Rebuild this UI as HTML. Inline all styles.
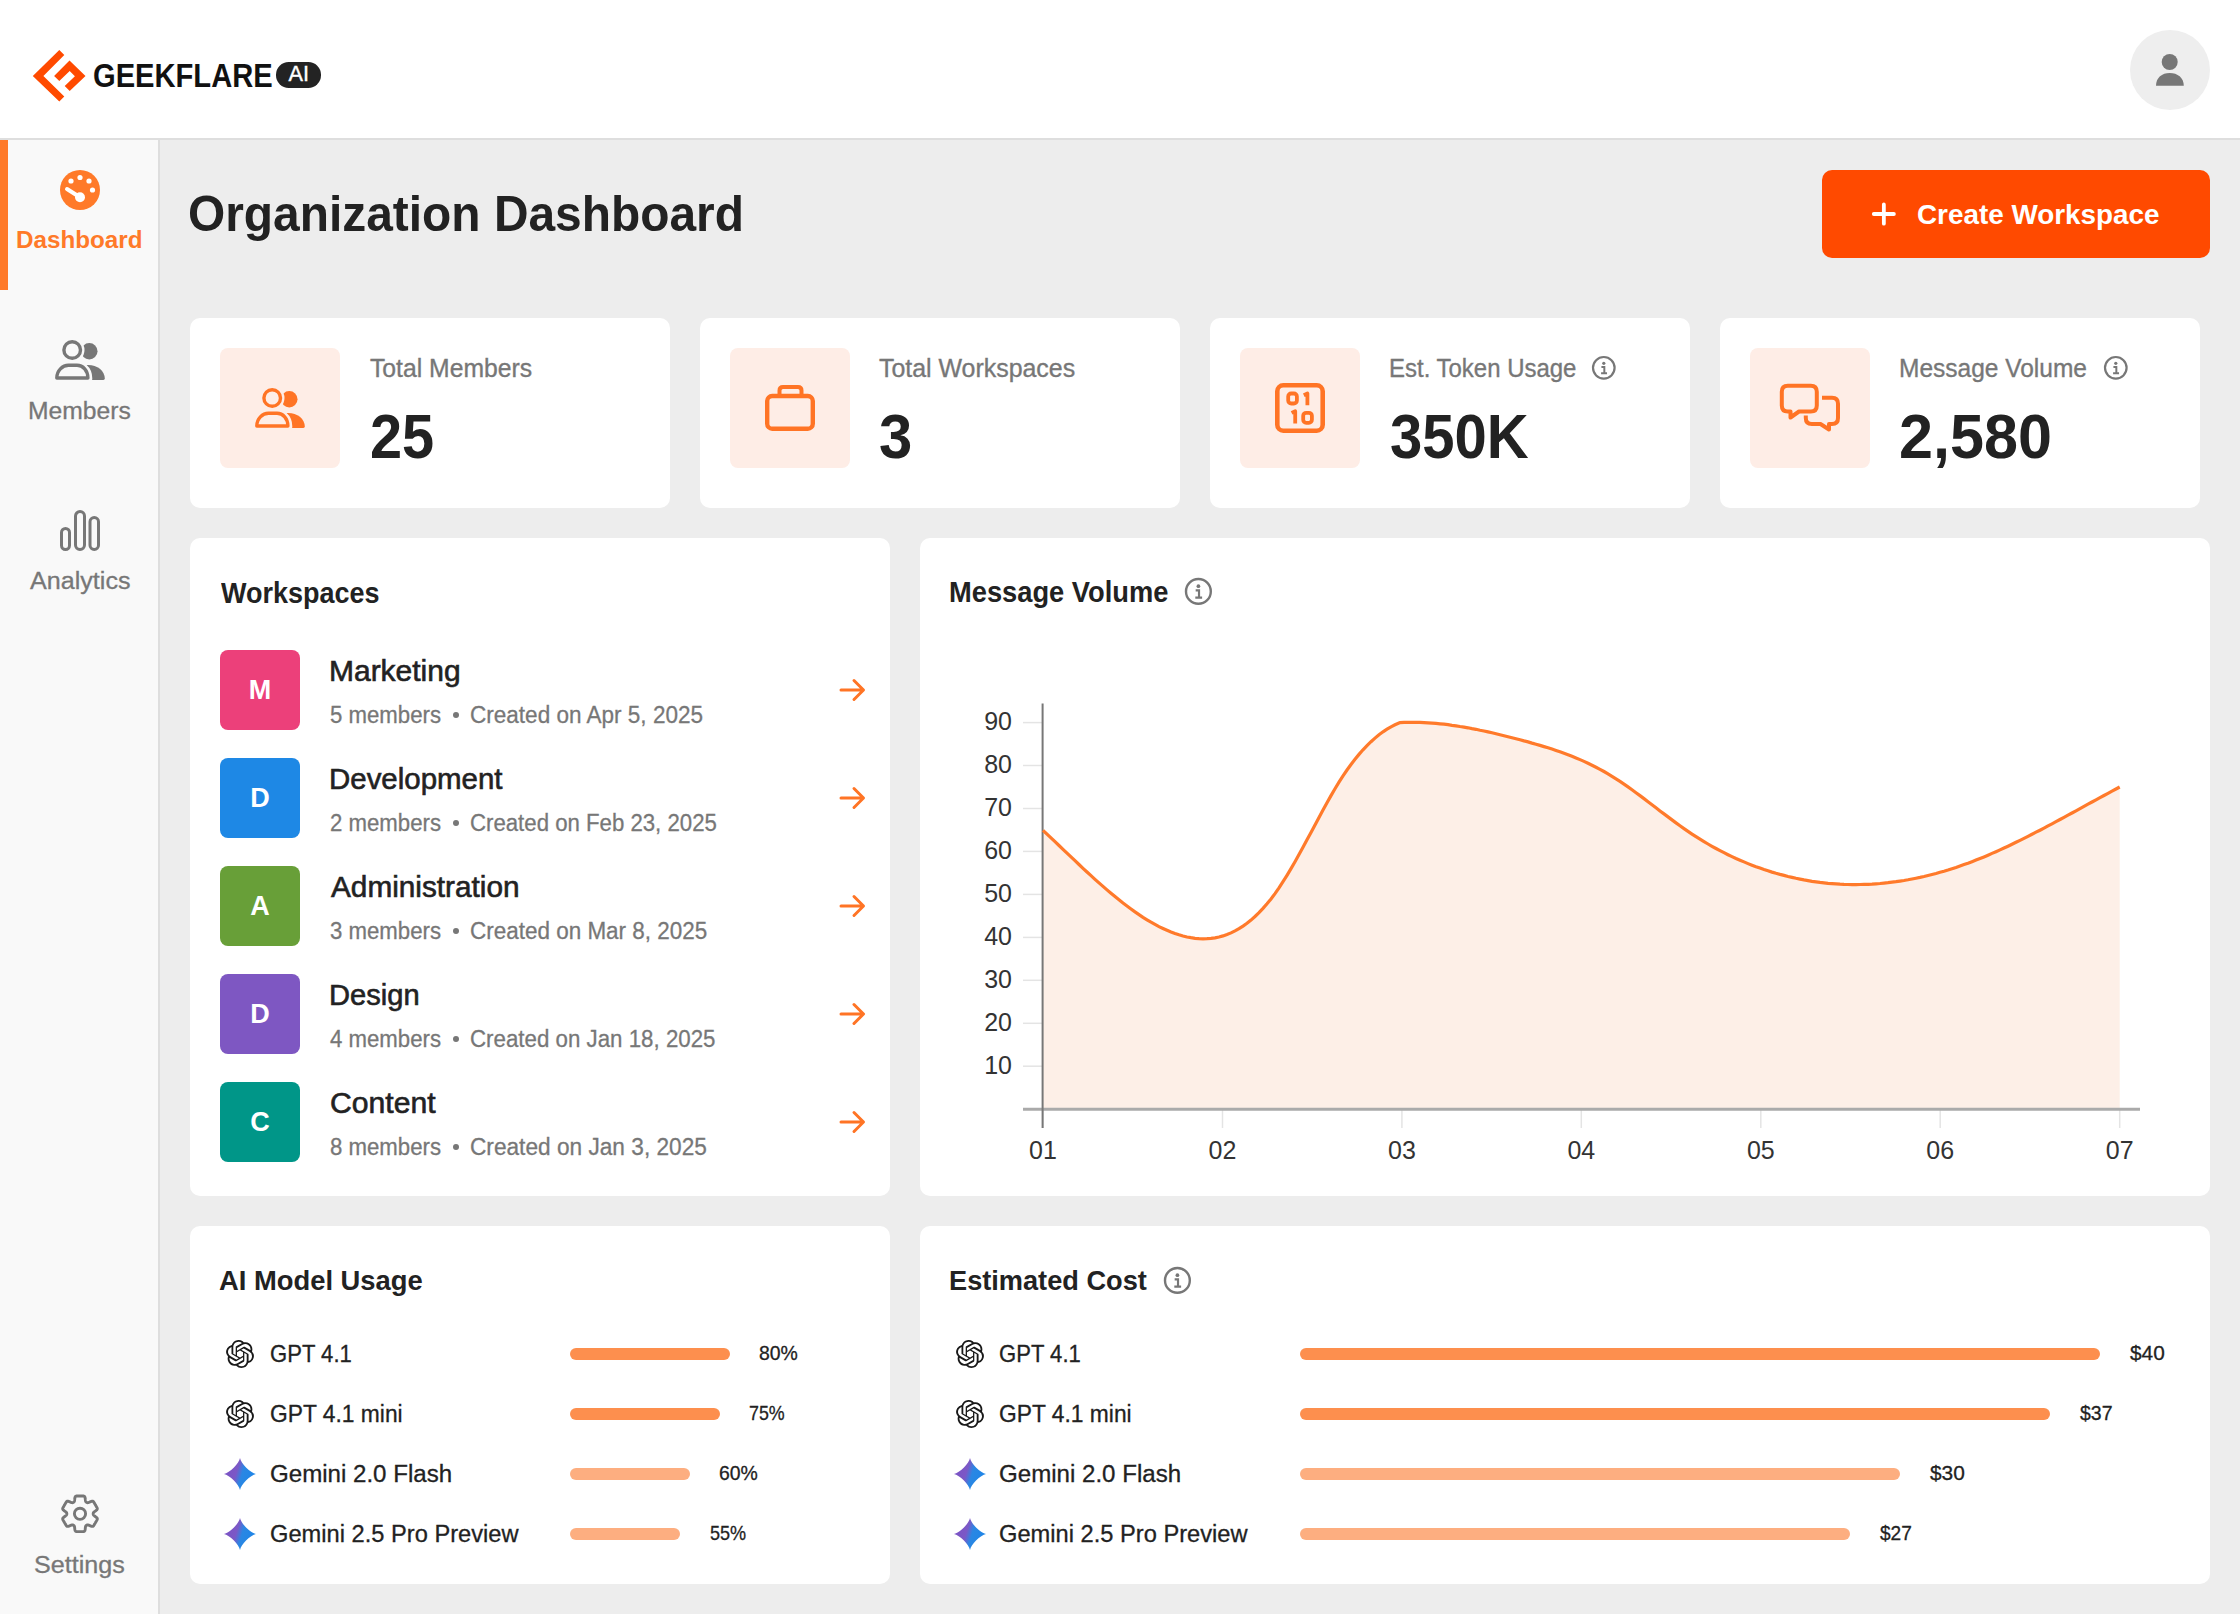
<!DOCTYPE html><html><head><meta charset="utf-8"><style>
*{box-sizing:border-box;margin:0;padding:0}
html,body{width:2240px;height:1614px;overflow:hidden;background:#ededed;font-family:"Liberation Sans",sans-serif;color:#222}
.a{position:absolute}
.t{position:absolute;line-height:1;white-space:nowrap;transform-origin:0 0}
.card{position:absolute;background:#fff;border-radius:10px}
.ibox{position:absolute;width:120px;height:120px;border-radius:8px;background:#feede6;top:348px}
.av{position:absolute;left:220px;width:80px;height:80px;border-radius:8px}
.bar{position:absolute;height:12px;border-radius:6px}
.b1{background:#fd8f4e}
.b2{background:#fdae80}
</style></head><body>
<div class="a" style="left:0;top:0;width:2240px;height:140px;background:#fff;border-bottom:2px solid #dedede"></div>
<svg class="a" style="left:0;top:0" width="100" height="120" viewBox="0 0 100 120"><path d="M59.3,50 L64.3,55 L43.4,76 L64.3,96.6 L59.3,101.6 L32.8,76 Z" fill="#ff4a00"/><path d="M69.5,60.6 L85.5,76 L69.7,91 L64.7,86.1 L74.9,76.2 L69.7,71 L59.3,81 L54.1,76 Z" fill="#ff4a00"/></svg>
<div class="a" style="left:275.6px;top:62.2px;width:45.6px;height:25.5px;border-radius:12.75px;background:#232323"></div>
<div class="t" style="left:288.5px;top:62.6px;font-size:21.7px;color:#fff;font-weight:normal;-webkit-text-stroke:0.35px #fff">AI</div>
<div class="a" style="left:2130px;top:30px;width:80px;height:80px;border-radius:40px;background:#eeeeee"></div>
<svg class="a" style="left:2150px;top:50px" width="40" height="40" viewBox="0 0 40 40"><circle cx="19.7" cy="12" r="8" fill="#777"/><path d="M6,35.7 C6,27.5 12,22.9 19.7,22.9 C27.5,22.9 33.8,27.5 33.8,35.7 Z" fill="#777"/></svg>
<div class="a" style="left:0;top:140px;width:160px;height:1474px;background:#f9f9f9;border-right:2px solid #dedede"></div>
<div class="a" style="left:0;top:140px;width:8px;height:150px;background:#ff7a29"></div>
<svg class="a" style="left:58px;top:168px" width="44" height="44" viewBox="-22 -22 44 44"><circle cx="0" cy="0" r="20" fill="#ff7a29"/><circle cx="0" cy="-12.5" r="2.6" fill="#fff"/><circle cx="-9" cy="-9" r="2.6" fill="#fff"/><circle cx="9" cy="-9" r="2.6" fill="#fff"/><circle cx="12.5" cy="0" r="2.6" fill="#fff"/><path d="M-13,-1 L0,7.3" stroke="#fff" stroke-width="4" stroke-linecap="round"/><circle cx="0" cy="7.3" r="5" fill="#fff"/></svg>
<svg class="a" style="left:55px;top:340px" width="50.0" height="40.0" viewBox="0 0 50 40"><circle cx="34.3" cy="11.2" r="8.2" fill="#777"/><path d="M31,25 C41,24 49.8,30 49.8,38.6 Q49.8,40 48.4,40 L36,40 Z" fill="#777"/><circle cx="17.5" cy="10" r="8.5" fill="#f9f9f9" stroke="#f9f9f9" stroke-width="7"/><path d="M1.5,38.5 C1.5,29 8.5,23.6 17.6,23.6 C26.7,23.6 33.8,29 33.8,38.5 Z" fill="#f9f9f9" stroke="#f9f9f9" stroke-width="7" stroke-linejoin="round"/><circle cx="17.2" cy="10" r="8.3" fill="none" stroke="#777" stroke-width="3.4"/><path d="M1.8,38 C1.8,30.5 7.5,25.3 13.5,25.3 H22 C28,25.3 32.9,30.5 32.9,38 Z" fill="none" stroke="#777" stroke-width="3.4" stroke-linejoin="round"/></svg>
<svg class="a" style="left:58px;top:508px" width="44" height="44" viewBox="0 0 44 44"><rect x="3.5" y="20.5" width="8" height="21" rx="4" fill="none" stroke="#777" stroke-width="3"/><rect x="17.5" y="3.5" width="9" height="38" rx="4.5" fill="none" stroke="#777" stroke-width="3"/><rect x="32" y="9.5" width="8.5" height="32" rx="4.25" fill="none" stroke="#777" stroke-width="3"/></svg>
<svg class="a" style="left:56px;top:1490px" width="48" height="48" viewBox="0 0 48 48"><path d="M37.20,23.80 L37.21,23.63 L37.22,23.45 L37.24,23.27 L37.28,23.09 L37.34,22.91 L37.44,22.72 L37.57,22.52 L37.75,22.31 L37.97,22.09 L38.24,21.86 L38.55,21.61 L38.90,21.36 L39.27,21.09 L39.65,20.81 L40.02,20.53 L40.37,20.24 L40.67,19.96 L40.92,19.68 L41.11,19.41 L41.24,19.15 L41.30,18.90 L41.32,18.66 L41.29,18.43 L41.23,18.20 L41.14,17.98 L41.05,17.77 L40.94,17.56 L40.82,17.35 L40.71,17.14 L40.59,16.94 L40.47,16.73 L40.35,16.52 L40.24,16.32 L40.12,16.12 L40.00,15.91 L39.88,15.71 L39.77,15.51 L39.65,15.30 L39.53,15.10 L39.42,14.90 L39.30,14.70 L39.18,14.50 L39.06,14.29 L38.95,14.09 L38.83,13.89 L38.71,13.68 L38.60,13.48 L38.48,13.28 L38.36,13.07 L38.24,12.87 L38.12,12.66 L38.00,12.46 L37.87,12.25 L37.75,12.05 L37.61,11.86 L37.46,11.68 L37.30,11.51 L37.11,11.37 L36.90,11.27 L36.65,11.20 L36.36,11.18 L36.03,11.21 L35.67,11.28 L35.27,11.40 L34.85,11.56 L34.42,11.74 L33.99,11.93 L33.57,12.12 L33.17,12.29 L32.80,12.44 L32.46,12.56 L32.16,12.64 L31.90,12.69 L31.66,12.70 L31.45,12.69 L31.25,12.65 L31.08,12.60 L30.91,12.53 L30.75,12.45 L30.60,12.37 L30.45,12.28 L30.31,12.18 L30.16,12.07 L30.03,11.94 L29.90,11.80 L29.78,11.62 L29.67,11.41 L29.58,11.15 L29.50,10.85 L29.44,10.50 L29.38,10.11 L29.33,9.67 L29.29,9.22 L29.24,8.75 L29.18,8.28 L29.10,7.84 L29.01,7.44 L28.89,7.08 L28.75,6.79 L28.59,6.55 L28.41,6.37 L28.21,6.23 L27.99,6.14 L27.77,6.08 L27.54,6.04 L27.30,6.02 L27.06,6.01 L26.83,6.00 L26.59,6.00 L26.35,6.00 L26.11,6.00 L25.88,6.00 L25.64,6.00 L25.40,6.00 L25.17,6.00 L24.94,6.00 L24.70,6.00 L24.47,6.00 L24.23,6.00 L24.00,6.00 L23.77,6.00 L23.53,6.00 L23.30,6.00 L23.06,6.00 L22.83,6.00 L22.60,6.00 L22.36,6.00 L22.12,6.00 L21.89,6.00 L21.65,6.00 L21.41,6.00 L21.17,6.00 L20.94,6.01 L20.70,6.02 L20.46,6.04 L20.23,6.08 L20.01,6.14 L19.79,6.23 L19.59,6.37 L19.41,6.55 L19.25,6.79 L19.11,7.08 L18.99,7.44 L18.90,7.84 L18.82,8.28 L18.76,8.75 L18.71,9.22 L18.67,9.67 L18.62,10.11 L18.56,10.50 L18.50,10.85 L18.42,11.15 L18.33,11.41 L18.22,11.62 L18.10,11.80 L17.97,11.94 L17.84,12.07 L17.69,12.18 L17.55,12.28 L17.40,12.37 L17.25,12.45 L17.09,12.53 L16.92,12.60 L16.75,12.65 L16.55,12.69 L16.34,12.70 L16.10,12.69 L15.84,12.64 L15.54,12.56 L15.20,12.44 L14.83,12.29 L14.43,12.12 L14.01,11.93 L13.58,11.74 L13.15,11.56 L12.73,11.40 L12.33,11.28 L11.97,11.21 L11.64,11.18 L11.35,11.20 L11.10,11.27 L10.89,11.37 L10.70,11.51 L10.54,11.68 L10.39,11.86 L10.25,12.05 L10.13,12.25 L10.00,12.46 L9.88,12.66 L9.76,12.87 L9.64,13.07 L9.52,13.28 L9.40,13.48 L9.29,13.68 L9.17,13.89 L9.05,14.09 L8.94,14.29 L8.82,14.50 L8.70,14.70 L8.58,14.90 L8.47,15.10 L8.35,15.30 L8.23,15.51 L8.12,15.71 L8.00,15.91 L7.88,16.12 L7.76,16.32 L7.65,16.52 L7.53,16.73 L7.41,16.94 L7.29,17.14 L7.18,17.35 L7.06,17.56 L6.95,17.77 L6.86,17.98 L6.77,18.20 L6.71,18.43 L6.68,18.66 L6.70,18.90 L6.76,19.15 L6.89,19.41 L7.08,19.68 L7.33,19.96 L7.63,20.24 L7.98,20.53 L8.35,20.81 L8.73,21.09 L9.10,21.36 L9.45,21.61 L9.76,21.86 L10.03,22.09 L10.25,22.31 L10.43,22.52 L10.56,22.72 L10.66,22.91 L10.72,23.09 L10.76,23.27 L10.78,23.45 L10.79,23.63 L10.80,23.80 L10.79,23.97 L10.78,24.15 L10.76,24.33 L10.72,24.51 L10.66,24.69 L10.56,24.88 L10.43,25.08 L10.25,25.29 L10.03,25.51 L9.76,25.74 L9.45,25.99 L9.10,26.24 L8.73,26.51 L8.35,26.79 L7.98,27.07 L7.63,27.36 L7.33,27.64 L7.08,27.92 L6.89,28.19 L6.76,28.45 L6.70,28.70 L6.68,28.94 L6.71,29.17 L6.77,29.40 L6.86,29.62 L6.95,29.83 L7.06,30.04 L7.18,30.25 L7.29,30.46 L7.41,30.66 L7.53,30.87 L7.65,31.08 L7.76,31.28 L7.88,31.48 L8.00,31.69 L8.12,31.89 L8.23,32.09 L8.35,32.30 L8.47,32.50 L8.58,32.70 L8.70,32.90 L8.82,33.10 L8.94,33.31 L9.05,33.51 L9.17,33.71 L9.29,33.92 L9.40,34.12 L9.52,34.32 L9.64,34.53 L9.76,34.73 L9.88,34.94 L10.00,35.14 L10.13,35.35 L10.25,35.55 L10.39,35.74 L10.54,35.92 L10.70,36.09 L10.89,36.23 L11.10,36.33 L11.35,36.40 L11.64,36.42 L11.97,36.39 L12.33,36.32 L12.73,36.20 L13.15,36.04 L13.58,35.86 L14.01,35.67 L14.43,35.48 L14.83,35.31 L15.20,35.16 L15.54,35.04 L15.84,34.96 L16.10,34.91 L16.34,34.90 L16.55,34.91 L16.75,34.95 L16.92,35.00 L17.09,35.07 L17.25,35.15 L17.40,35.23 L17.55,35.32 L17.69,35.42 L17.84,35.53 L17.97,35.66 L18.10,35.80 L18.22,35.98 L18.33,36.19 L18.42,36.45 L18.50,36.75 L18.56,37.10 L18.62,37.49 L18.67,37.93 L18.71,38.38 L18.76,38.85 L18.82,39.32 L18.90,39.76 L18.99,40.16 L19.11,40.52 L19.25,40.81 L19.41,41.05 L19.59,41.23 L19.79,41.37 L20.01,41.46 L20.23,41.52 L20.46,41.56 L20.70,41.58 L20.94,41.59 L21.17,41.60 L21.41,41.60 L21.65,41.60 L21.89,41.60 L22.12,41.60 L22.36,41.60 L22.60,41.60 L22.83,41.60 L23.06,41.60 L23.30,41.60 L23.53,41.60 L23.77,41.60 L24.00,41.60 L24.23,41.60 L24.47,41.60 L24.70,41.60 L24.94,41.60 L25.17,41.60 L25.40,41.60 L25.64,41.60 L25.88,41.60 L26.11,41.60 L26.35,41.60 L26.59,41.60 L26.83,41.60 L27.06,41.59 L27.30,41.58 L27.54,41.56 L27.77,41.52 L27.99,41.46 L28.21,41.37 L28.41,41.23 L28.59,41.05 L28.75,40.81 L28.89,40.52 L29.01,40.16 L29.10,39.76 L29.18,39.32 L29.24,38.85 L29.29,38.38 L29.33,37.93 L29.38,37.49 L29.44,37.10 L29.50,36.75 L29.58,36.45 L29.67,36.19 L29.78,35.98 L29.90,35.80 L30.03,35.66 L30.16,35.53 L30.31,35.42 L30.45,35.32 L30.60,35.23 L30.75,35.15 L30.91,35.07 L31.08,35.00 L31.25,34.95 L31.45,34.91 L31.66,34.90 L31.90,34.91 L32.16,34.96 L32.46,35.04 L32.80,35.16 L33.17,35.31 L33.57,35.48 L33.99,35.67 L34.42,35.86 L34.85,36.04 L35.27,36.20 L35.67,36.32 L36.03,36.39 L36.36,36.42 L36.65,36.40 L36.90,36.33 L37.11,36.23 L37.30,36.09 L37.46,35.92 L37.61,35.74 L37.75,35.55 L37.87,35.35 L38.00,35.14 L38.12,34.94 L38.24,34.73 L38.36,34.53 L38.48,34.32 L38.60,34.12 L38.71,33.92 L38.83,33.71 L38.95,33.51 L39.06,33.31 L39.18,33.10 L39.30,32.90 L39.42,32.70 L39.53,32.50 L39.65,32.30 L39.77,32.09 L39.88,31.89 L40.00,31.69 L40.12,31.48 L40.24,31.28 L40.35,31.08 L40.47,30.87 L40.59,30.66 L40.71,30.46 L40.82,30.25 L40.94,30.04 L41.05,29.83 L41.14,29.62 L41.23,29.40 L41.29,29.17 L41.32,28.94 L41.30,28.70 L41.24,28.45 L41.11,28.19 L40.92,27.92 L40.67,27.64 L40.37,27.36 L40.02,27.07 L39.65,26.79 L39.27,26.51 L38.90,26.24 L38.55,25.99 L38.24,25.74 L37.97,25.51 L37.75,25.29 L37.57,25.08 L37.44,24.88 L37.34,24.69 L37.28,24.51 L37.24,24.33 L37.22,24.15 L37.21,23.97Z" fill="none" stroke="#777" stroke-width="2.9" stroke-linejoin="round"/><circle cx="24" cy="23.8" r="5.6" fill="none" stroke="#777" stroke-width="2.9"/></svg>
<div class="a" style="left:1822px;top:170px;width:388px;height:88px;border-radius:10px;background:#ff4a00"></div>
<svg class="a" style="left:1868px;top:198px" width="32" height="32" viewBox="0 0 32 32"><path d="M15.85,6.4 V25.7 M5.8,16 H25.9" stroke="#fff" stroke-width="3.8" stroke-linecap="round"/></svg>
<div class="card" style="left:190px;top:318px;width:480px;height:190px;border-radius:10px"></div>
<div class="ibox" style="left:220px"></div>
<div class="card" style="left:700px;top:318px;width:480px;height:190px;border-radius:10px"></div>
<div class="ibox" style="left:730px"></div>
<div class="card" style="left:1210px;top:318px;width:480px;height:190px;border-radius:10px"></div>
<div class="ibox" style="left:1240px"></div>
<div class="card" style="left:1720px;top:318px;width:480px;height:190px;border-radius:10px"></div>
<div class="ibox" style="left:1750px"></div>
<svg class="a" style="left:254.7px;top:388px" width="50.0" height="40.0" viewBox="0 0 50 40"><circle cx="34.3" cy="11.2" r="8.2" fill="#ff7425"/><path d="M31,25 C41,24 49.8,30 49.8,38.6 Q49.8,40 48.4,40 L36,40 Z" fill="#ff7425"/><circle cx="17.5" cy="10" r="8.5" fill="#feede6" stroke="#feede6" stroke-width="7"/><path d="M1.5,38.5 C1.5,29 8.5,23.6 17.6,23.6 C26.7,23.6 33.8,29 33.8,38.5 Z" fill="#feede6" stroke="#feede6" stroke-width="7" stroke-linejoin="round"/><circle cx="17.2" cy="10" r="8.3" fill="none" stroke="#ff7425" stroke-width="3.4"/><path d="M1.8,38 C1.8,30.5 7.5,25.3 13.5,25.3 H22 C28,25.3 32.9,30.5 32.9,38 Z" fill="none" stroke="#ff7425" stroke-width="3.4" stroke-linejoin="round"/></svg>
<svg class="a" style="left:760px;top:380px" width="60" height="56" viewBox="0 0 60 56"><rect x="7.2" y="16" width="45.6" height="32.7" rx="5" fill="none" stroke="#ff7425" stroke-width="4.4"/><path d="M19.5,16 V10.5 Q19.5,7 23,7 H38 Q41.5,7 41.5,10.5 V16" fill="none" stroke="#ff7425" stroke-width="4"/></svg>
<svg class="a" style="left:1270px;top:378px" width="60" height="60" viewBox="0 0 60 60"><rect x="7.3" y="7.3" width="45.4" height="45.4" rx="6" fill="none" stroke="#ff7425" stroke-width="4.6"/><rect x="18.2" y="15.5" width="8.7" height="10" rx="3" fill="none" stroke="#ff7425" stroke-width="3.8"/><path d="M33.8,17.2 L37.4,15.5 V27.3" fill="none" stroke="#ff7425" stroke-width="3.8" stroke-linejoin="round"/><path d="M21.6,34.9 L25.2,33.2 V45.6" fill="none" stroke="#ff7425" stroke-width="3.8" stroke-linejoin="round"/><rect x="33.2" y="34.8" width="8.7" height="10" rx="3" fill="none" stroke="#ff7425" stroke-width="3.8"/></svg>
<svg class="a" style="left:1776px;top:380px" width="68" height="56" viewBox="0 0 68 56"><path d="M11.8,5.7 H34.8 Q40.8,5.7 40.8,11.7 V25.5 Q40.8,31.5 34.8,31.5 H23 L14.5,37.5 V31.5 H11.8 Q5.8,31.5 5.8,25.5 V11.7 Q5.8,5.7 11.8,5.7 Z" fill="none" stroke="#ff7425" stroke-width="4" stroke-linejoin="round"/><path d="M46,17.8 H56 Q62,17.8 62,23.8 V38 Q62,44 56,44 H53 V49.5 L44.5,44 H35.8 Q29.8,44 29.8,38 V35.5" fill="none" stroke="#ff7425" stroke-width="4" stroke-linejoin="round"/></svg>
<svg class="a" style="left:1591.0px;top:355.2px" width="25.6" height="25.6" viewBox="-12.8 -12.8 25.6 25.6"><circle cx="0" cy="0" r="10.8" fill="none" stroke="#777" stroke-width="2.2"/><circle cx="0" cy="-4.54" r="1.62" fill="#777"/><path d="M-2.38,-0.86 H0.54 V5.40 M-2.70,5.40 H3.24" stroke="#777" stroke-width="1.98" fill="none"/></svg>
<svg class="a" style="left:2103.1px;top:355.2px" width="25.6" height="25.6" viewBox="-12.8 -12.8 25.6 25.6"><circle cx="0" cy="0" r="10.8" fill="none" stroke="#777" stroke-width="2.2"/><circle cx="0" cy="-4.54" r="1.62" fill="#777"/><path d="M-2.38,-0.86 H0.54 V5.40 M-2.70,5.40 H3.24" stroke="#777" stroke-width="1.98" fill="none"/></svg>
<div class="card" style="left:190px;top:538px;width:700px;height:658px"></div>
<div class="card" style="left:920px;top:538px;width:1290px;height:658px"></div>
<div class="card" style="left:190px;top:1226px;width:700px;height:358px"></div>
<div class="card" style="left:920px;top:1226px;width:1290px;height:358px"></div>
<svg class="a" style="left:1183.5px;top:577.4px" width="28.8" height="28.8" viewBox="-14.4 -14.4 28.8 28.8"><circle cx="0" cy="0" r="12.4" fill="none" stroke="#777" stroke-width="2.4"/><circle cx="0" cy="-5.21" r="1.86" fill="#777"/><path d="M-2.73,-0.99 H0.62 V6.20 M-3.10,6.20 H3.72" stroke="#777" stroke-width="2.16" fill="none"/></svg>
<svg class="a" style="left:1163.3999999999999px;top:1266.1px" width="28.8" height="28.8" viewBox="-14.4 -14.4 28.8 28.8"><circle cx="0" cy="0" r="12.4" fill="none" stroke="#777" stroke-width="2.4"/><circle cx="0" cy="-5.21" r="1.86" fill="#777"/><path d="M-2.73,-0.99 H0.62 V6.20 M-3.10,6.20 H3.72" stroke="#777" stroke-width="2.16" fill="none"/></svg>
<div class="av" style="top:650px;background:#ec407a"></div>
<div class="a" style="left:220px;top:650px;width:80px;height:80px;line-height:80px;text-align:center;font-size:27px;font-weight:bold;color:#fff">M</div>
<div class="a" style="left:453.4px;top:711.8px;width:6px;height:6px;border-radius:3px;background:#777"></div>
<svg class="a" style="left:836px;top:676px" width="32" height="28" viewBox="0 0 32 28"><path d="M5,14 H27 M18,4.5 L27.5,14 L18,23.5" fill="none" stroke="#ff7425" stroke-width="3" stroke-linecap="round" stroke-linejoin="round"/></svg>
<div class="av" style="top:758px;background:#1e88e5"></div>
<div class="a" style="left:220px;top:758px;width:80px;height:80px;line-height:80px;text-align:center;font-size:27px;font-weight:bold;color:#fff">D</div>
<div class="a" style="left:453.4px;top:819.8px;width:6px;height:6px;border-radius:3px;background:#777"></div>
<svg class="a" style="left:836px;top:784px" width="32" height="28" viewBox="0 0 32 28"><path d="M5,14 H27 M18,4.5 L27.5,14 L18,23.5" fill="none" stroke="#ff7425" stroke-width="3" stroke-linecap="round" stroke-linejoin="round"/></svg>
<div class="av" style="top:866px;background:#689f38"></div>
<div class="a" style="left:220px;top:866px;width:80px;height:80px;line-height:80px;text-align:center;font-size:27px;font-weight:bold;color:#fff">A</div>
<div class="a" style="left:453.4px;top:927.8px;width:6px;height:6px;border-radius:3px;background:#777"></div>
<svg class="a" style="left:836px;top:892px" width="32" height="28" viewBox="0 0 32 28"><path d="M5,14 H27 M18,4.5 L27.5,14 L18,23.5" fill="none" stroke="#ff7425" stroke-width="3" stroke-linecap="round" stroke-linejoin="round"/></svg>
<div class="av" style="top:974px;background:#7e57c2"></div>
<div class="a" style="left:220px;top:974px;width:80px;height:80px;line-height:80px;text-align:center;font-size:27px;font-weight:bold;color:#fff">D</div>
<div class="a" style="left:453.4px;top:1035.8px;width:6px;height:6px;border-radius:3px;background:#777"></div>
<svg class="a" style="left:836px;top:1000px" width="32" height="28" viewBox="0 0 32 28"><path d="M5,14 H27 M18,4.5 L27.5,14 L18,23.5" fill="none" stroke="#ff7425" stroke-width="3" stroke-linecap="round" stroke-linejoin="round"/></svg>
<div class="av" style="top:1082px;background:#009688"></div>
<div class="a" style="left:220px;top:1082px;width:80px;height:80px;line-height:80px;text-align:center;font-size:27px;font-weight:bold;color:#fff">C</div>
<div class="a" style="left:453.4px;top:1143.8px;width:6px;height:6px;border-radius:3px;background:#777"></div>
<svg class="a" style="left:836px;top:1108px" width="32" height="28" viewBox="0 0 32 28"><path d="M5,14 H27 M18,4.5 L27.5,14 L18,23.5" fill="none" stroke="#ff7425" stroke-width="3" stroke-linecap="round" stroke-linejoin="round"/></svg>
<svg class="a" style="left:0;top:0" width="2240" height="1614" viewBox="0 0 2240 1614"><path d="M1043.0,830.3 L1047.0,834.1 L1051.0,837.9 L1055.0,841.7 L1059.0,845.5 L1063.0,849.3 L1067.0,853.1 L1071.0,856.9 L1075.0,860.7 L1079.0,864.5 L1083.0,868.3 L1087.0,872.0 L1091.0,875.6 L1095.0,879.3 L1099.0,882.9 L1103.0,886.4 L1107.0,889.9 L1111.0,893.3 L1115.0,896.6 L1119.0,899.8 L1123.0,903.0 L1127.0,906.0 L1131.0,909.0 L1135.0,911.9 L1139.0,914.6 L1143.0,917.3 L1147.0,919.8 L1151.0,922.2 L1155.0,924.4 L1159.0,926.6 L1163.0,928.5 L1167.0,930.3 L1171.0,932.0 L1175.0,933.5 L1179.0,934.8 L1183.0,936.0 L1187.0,937.0 L1191.0,937.7 L1195.0,938.3 L1199.0,938.7 L1203.0,938.8 L1207.0,938.7 L1211.0,938.4 L1215.0,937.8 L1219.0,937.0 L1223.0,935.9 L1227.0,934.5 L1231.0,932.9 L1235.0,930.9 L1239.0,928.7 L1243.0,926.1 L1247.0,923.3 L1251.0,920.1 L1255.0,916.5 L1259.0,912.7 L1263.0,908.4 L1267.0,903.8 L1271.0,898.9 L1275.0,893.6 L1279.0,887.8 L1283.0,881.7 L1287.0,875.3 L1291.0,868.6 L1295.0,861.7 L1299.0,854.5 L1303.0,847.2 L1307.0,839.8 L1311.0,832.4 L1315.0,824.9 L1319.0,817.4 L1323.0,810.0 L1327.0,802.7 L1331.0,795.6 L1335.0,788.7 L1339.0,782.2 L1343.0,775.9 L1347.0,770.0 L1351.0,764.5 L1355.0,759.3 L1359.0,754.4 L1363.0,749.8 L1367.0,745.6 L1371.0,741.7 L1375.0,738.1 L1379.0,734.8 L1383.0,731.8 L1387.0,729.2 L1391.0,726.8 L1395.0,724.8 L1399.0,723.0 L1400.0,722.6 L1404.0,722.4 L1408.0,722.3 L1412.0,722.3 L1416.0,722.3 L1420.0,722.4 L1424.0,722.6 L1428.0,722.8 L1432.0,723.1 L1436.0,723.4 L1440.0,723.8 L1444.0,724.2 L1448.0,724.7 L1452.0,725.3 L1456.0,725.8 L1460.0,726.5 L1464.0,727.1 L1468.0,727.8 L1472.0,728.6 L1476.0,729.3 L1480.0,730.2 L1484.0,731.0 L1488.0,731.9 L1492.0,732.8 L1496.0,733.7 L1500.0,734.7 L1504.0,735.7 L1508.0,736.7 L1512.0,737.7 L1516.0,738.7 L1520.0,739.8 L1524.0,740.9 L1528.0,741.9 L1532.0,743.1 L1536.0,744.2 L1540.0,745.4 L1544.0,746.6 L1548.0,747.8 L1552.0,749.1 L1556.0,750.4 L1560.0,751.8 L1564.0,753.2 L1568.0,754.7 L1572.0,756.3 L1576.0,757.9 L1580.0,759.6 L1584.0,761.4 L1588.0,763.3 L1592.0,765.2 L1596.0,767.2 L1600.0,769.3 L1604.0,771.5 L1608.0,773.8 L1612.0,776.3 L1616.0,778.8 L1620.0,781.4 L1624.0,784.1 L1628.0,786.9 L1632.0,789.8 L1636.0,792.7 L1640.0,795.6 L1644.0,798.6 L1648.0,801.7 L1652.0,804.7 L1656.0,807.8 L1660.0,810.9 L1664.0,813.9 L1668.0,816.9 L1672.0,819.9 L1676.0,822.9 L1680.0,825.8 L1684.0,828.6 L1688.0,831.4 L1692.0,834.1 L1696.0,836.7 L1700.0,839.2 L1704.0,841.6 L1708.0,844.0 L1712.0,846.3 L1716.0,848.5 L1720.0,850.6 L1724.0,852.7 L1728.0,854.7 L1732.0,856.6 L1736.0,858.5 L1740.0,860.2 L1744.0,861.9 L1748.0,863.6 L1752.0,865.2 L1756.0,866.7 L1760.0,868.1 L1764.0,869.5 L1768.0,870.8 L1772.0,872.1 L1776.0,873.3 L1780.0,874.4 L1784.0,875.4 L1788.0,876.5 L1792.0,877.4 L1796.0,878.3 L1800.0,879.1 L1804.0,879.9 L1808.0,880.6 L1812.0,881.3 L1816.0,881.8 L1820.0,882.4 L1824.0,882.8 L1828.0,883.3 L1832.0,883.6 L1836.0,883.9 L1840.0,884.2 L1844.0,884.4 L1848.0,884.5 L1852.0,884.6 L1856.0,884.6 L1860.0,884.5 L1864.0,884.4 L1868.0,884.3 L1872.0,884.1 L1876.0,883.8 L1880.0,883.5 L1884.0,883.1 L1888.0,882.7 L1892.0,882.2 L1896.0,881.7 L1900.0,881.1 L1904.0,880.5 L1908.0,879.8 L1912.0,879.0 L1916.0,878.2 L1920.0,877.4 L1924.0,876.5 L1928.0,875.5 L1932.0,874.5 L1936.0,873.5 L1940.0,872.3 L1944.0,871.2 L1948.0,870.0 L1952.0,868.7 L1956.0,867.4 L1960.0,866.0 L1964.0,864.6 L1968.0,863.2 L1972.0,861.7 L1976.0,860.1 L1980.0,858.5 L1984.0,856.9 L1988.0,855.2 L1992.0,853.4 L1996.0,851.7 L2000.0,849.9 L2004.0,848.0 L2008.0,846.2 L2012.0,844.3 L2016.0,842.3 L2020.0,840.4 L2024.0,838.4 L2028.0,836.3 L2032.0,834.3 L2036.0,832.2 L2040.0,830.2 L2044.0,828.1 L2048.0,825.9 L2052.0,823.8 L2056.0,821.7 L2060.0,819.5 L2064.0,817.3 L2068.0,815.2 L2072.0,813.0 L2076.0,810.8 L2080.0,808.6 L2084.0,806.4 L2088.0,804.2 L2092.0,802.0 L2096.0,799.8 L2100.0,797.6 L2104.0,795.5 L2108.0,793.3 L2112.0,791.1 L2116.0,789.0 L2119.7,787.0 L2119.7,1109.2 L1043,1109.2 Z" fill="#fdefe7"/><line x1="1023" y1="1066.2" x2="1043" y2="1066.2" stroke="#e4e4e4" stroke-width="1.5"/><text x="1012" y="1074.0" text-anchor="end" font-family="Liberation Sans" font-size="25" fill="#333">10</text><line x1="1023" y1="1023.3" x2="1043" y2="1023.3" stroke="#e4e4e4" stroke-width="1.5"/><text x="1012" y="1031.1" text-anchor="end" font-family="Liberation Sans" font-size="25" fill="#333">20</text><line x1="1023" y1="980.3" x2="1043" y2="980.3" stroke="#e4e4e4" stroke-width="1.5"/><text x="1012" y="988.1" text-anchor="end" font-family="Liberation Sans" font-size="25" fill="#333">30</text><line x1="1023" y1="937.4" x2="1043" y2="937.4" stroke="#e4e4e4" stroke-width="1.5"/><text x="1012" y="945.2" text-anchor="end" font-family="Liberation Sans" font-size="25" fill="#333">40</text><line x1="1023" y1="894.4" x2="1043" y2="894.4" stroke="#e4e4e4" stroke-width="1.5"/><text x="1012" y="902.2" text-anchor="end" font-family="Liberation Sans" font-size="25" fill="#333">50</text><line x1="1023" y1="851.4" x2="1043" y2="851.4" stroke="#e4e4e4" stroke-width="1.5"/><text x="1012" y="859.2" text-anchor="end" font-family="Liberation Sans" font-size="25" fill="#333">60</text><line x1="1023" y1="808.5" x2="1043" y2="808.5" stroke="#e4e4e4" stroke-width="1.5"/><text x="1012" y="816.3" text-anchor="end" font-family="Liberation Sans" font-size="25" fill="#333">70</text><line x1="1023" y1="765.5" x2="1043" y2="765.5" stroke="#e4e4e4" stroke-width="1.5"/><text x="1012" y="773.3" text-anchor="end" font-family="Liberation Sans" font-size="25" fill="#333">80</text><line x1="1023" y1="722.6" x2="1043" y2="722.6" stroke="#e4e4e4" stroke-width="1.5"/><text x="1012" y="730.4" text-anchor="end" font-family="Liberation Sans" font-size="25" fill="#333">90</text><line x1="1043.0" y1="1109" x2="1043.0" y2="1128" stroke="#e4e4e4" stroke-width="1.5"/><text x="1043.0" y="1158.6" text-anchor="middle" font-family="Liberation Sans" font-size="25" fill="#333">01</text><line x1="1222.5" y1="1109" x2="1222.5" y2="1128" stroke="#e4e4e4" stroke-width="1.5"/><text x="1222.5" y="1158.6" text-anchor="middle" font-family="Liberation Sans" font-size="25" fill="#333">02</text><line x1="1401.9" y1="1109" x2="1401.9" y2="1128" stroke="#e4e4e4" stroke-width="1.5"/><text x="1401.9" y="1158.6" text-anchor="middle" font-family="Liberation Sans" font-size="25" fill="#333">03</text><line x1="1581.3" y1="1109" x2="1581.3" y2="1128" stroke="#e4e4e4" stroke-width="1.5"/><text x="1581.3" y="1158.6" text-anchor="middle" font-family="Liberation Sans" font-size="25" fill="#333">04</text><line x1="1760.8" y1="1109" x2="1760.8" y2="1128" stroke="#e4e4e4" stroke-width="1.5"/><text x="1760.8" y="1158.6" text-anchor="middle" font-family="Liberation Sans" font-size="25" fill="#333">05</text><line x1="1940.2" y1="1109" x2="1940.2" y2="1128" stroke="#e4e4e4" stroke-width="1.5"/><text x="1940.2" y="1158.6" text-anchor="middle" font-family="Liberation Sans" font-size="25" fill="#333">06</text><line x1="2119.7" y1="1109" x2="2119.7" y2="1128" stroke="#e4e4e4" stroke-width="1.5"/><text x="2119.7" y="1158.6" text-anchor="middle" font-family="Liberation Sans" font-size="25" fill="#333">07</text><line x1="1023" y1="1109.2" x2="2140" y2="1109.2" stroke="#aaa" stroke-width="3"/><line x1="1042.6" y1="703.5" x2="1042.6" y2="1128" stroke="#777" stroke-width="2"/><path d="M1043.0,830.3 L1047.0,834.1 L1051.0,837.9 L1055.0,841.7 L1059.0,845.5 L1063.0,849.3 L1067.0,853.1 L1071.0,856.9 L1075.0,860.7 L1079.0,864.5 L1083.0,868.3 L1087.0,872.0 L1091.0,875.6 L1095.0,879.3 L1099.0,882.9 L1103.0,886.4 L1107.0,889.9 L1111.0,893.3 L1115.0,896.6 L1119.0,899.8 L1123.0,903.0 L1127.0,906.0 L1131.0,909.0 L1135.0,911.9 L1139.0,914.6 L1143.0,917.3 L1147.0,919.8 L1151.0,922.2 L1155.0,924.4 L1159.0,926.6 L1163.0,928.5 L1167.0,930.3 L1171.0,932.0 L1175.0,933.5 L1179.0,934.8 L1183.0,936.0 L1187.0,937.0 L1191.0,937.7 L1195.0,938.3 L1199.0,938.7 L1203.0,938.8 L1207.0,938.7 L1211.0,938.4 L1215.0,937.8 L1219.0,937.0 L1223.0,935.9 L1227.0,934.5 L1231.0,932.9 L1235.0,930.9 L1239.0,928.7 L1243.0,926.1 L1247.0,923.3 L1251.0,920.1 L1255.0,916.5 L1259.0,912.7 L1263.0,908.4 L1267.0,903.8 L1271.0,898.9 L1275.0,893.6 L1279.0,887.8 L1283.0,881.7 L1287.0,875.3 L1291.0,868.6 L1295.0,861.7 L1299.0,854.5 L1303.0,847.2 L1307.0,839.8 L1311.0,832.4 L1315.0,824.9 L1319.0,817.4 L1323.0,810.0 L1327.0,802.7 L1331.0,795.6 L1335.0,788.7 L1339.0,782.2 L1343.0,775.9 L1347.0,770.0 L1351.0,764.5 L1355.0,759.3 L1359.0,754.4 L1363.0,749.8 L1367.0,745.6 L1371.0,741.7 L1375.0,738.1 L1379.0,734.8 L1383.0,731.8 L1387.0,729.2 L1391.0,726.8 L1395.0,724.8 L1399.0,723.0 L1400.0,722.6 L1404.0,722.4 L1408.0,722.3 L1412.0,722.3 L1416.0,722.3 L1420.0,722.4 L1424.0,722.6 L1428.0,722.8 L1432.0,723.1 L1436.0,723.4 L1440.0,723.8 L1444.0,724.2 L1448.0,724.7 L1452.0,725.3 L1456.0,725.8 L1460.0,726.5 L1464.0,727.1 L1468.0,727.8 L1472.0,728.6 L1476.0,729.3 L1480.0,730.2 L1484.0,731.0 L1488.0,731.9 L1492.0,732.8 L1496.0,733.7 L1500.0,734.7 L1504.0,735.7 L1508.0,736.7 L1512.0,737.7 L1516.0,738.7 L1520.0,739.8 L1524.0,740.9 L1528.0,741.9 L1532.0,743.1 L1536.0,744.2 L1540.0,745.4 L1544.0,746.6 L1548.0,747.8 L1552.0,749.1 L1556.0,750.4 L1560.0,751.8 L1564.0,753.2 L1568.0,754.7 L1572.0,756.3 L1576.0,757.9 L1580.0,759.6 L1584.0,761.4 L1588.0,763.3 L1592.0,765.2 L1596.0,767.2 L1600.0,769.3 L1604.0,771.5 L1608.0,773.8 L1612.0,776.3 L1616.0,778.8 L1620.0,781.4 L1624.0,784.1 L1628.0,786.9 L1632.0,789.8 L1636.0,792.7 L1640.0,795.6 L1644.0,798.6 L1648.0,801.7 L1652.0,804.7 L1656.0,807.8 L1660.0,810.9 L1664.0,813.9 L1668.0,816.9 L1672.0,819.9 L1676.0,822.9 L1680.0,825.8 L1684.0,828.6 L1688.0,831.4 L1692.0,834.1 L1696.0,836.7 L1700.0,839.2 L1704.0,841.6 L1708.0,844.0 L1712.0,846.3 L1716.0,848.5 L1720.0,850.6 L1724.0,852.7 L1728.0,854.7 L1732.0,856.6 L1736.0,858.5 L1740.0,860.2 L1744.0,861.9 L1748.0,863.6 L1752.0,865.2 L1756.0,866.7 L1760.0,868.1 L1764.0,869.5 L1768.0,870.8 L1772.0,872.1 L1776.0,873.3 L1780.0,874.4 L1784.0,875.4 L1788.0,876.5 L1792.0,877.4 L1796.0,878.3 L1800.0,879.1 L1804.0,879.9 L1808.0,880.6 L1812.0,881.3 L1816.0,881.8 L1820.0,882.4 L1824.0,882.8 L1828.0,883.3 L1832.0,883.6 L1836.0,883.9 L1840.0,884.2 L1844.0,884.4 L1848.0,884.5 L1852.0,884.6 L1856.0,884.6 L1860.0,884.5 L1864.0,884.4 L1868.0,884.3 L1872.0,884.1 L1876.0,883.8 L1880.0,883.5 L1884.0,883.1 L1888.0,882.7 L1892.0,882.2 L1896.0,881.7 L1900.0,881.1 L1904.0,880.5 L1908.0,879.8 L1912.0,879.0 L1916.0,878.2 L1920.0,877.4 L1924.0,876.5 L1928.0,875.5 L1932.0,874.5 L1936.0,873.5 L1940.0,872.3 L1944.0,871.2 L1948.0,870.0 L1952.0,868.7 L1956.0,867.4 L1960.0,866.0 L1964.0,864.6 L1968.0,863.2 L1972.0,861.7 L1976.0,860.1 L1980.0,858.5 L1984.0,856.9 L1988.0,855.2 L1992.0,853.4 L1996.0,851.7 L2000.0,849.9 L2004.0,848.0 L2008.0,846.2 L2012.0,844.3 L2016.0,842.3 L2020.0,840.4 L2024.0,838.4 L2028.0,836.3 L2032.0,834.3 L2036.0,832.2 L2040.0,830.2 L2044.0,828.1 L2048.0,825.9 L2052.0,823.8 L2056.0,821.7 L2060.0,819.5 L2064.0,817.3 L2068.0,815.2 L2072.0,813.0 L2076.0,810.8 L2080.0,808.6 L2084.0,806.4 L2088.0,804.2 L2092.0,802.0 L2096.0,799.8 L2100.0,797.6 L2104.0,795.5 L2108.0,793.3 L2112.0,791.1 L2116.0,789.0 L2119.7,787.0" fill="none" stroke="#ff7a2b" stroke-width="3.2"/></svg>
<svg class="a" style="left:226.1px;top:1339.7px" width="28" height="28" viewBox="0 0 24 24"><path fill="#1a1a1a" d="M22.2819 9.8211a5.9847 5.9847 0 0 0-.5157-4.9108 6.0462 6.0462 0 0 0-6.5098-2.9A6.0651 6.0651 0 0 0 4.9807 4.1818a5.9847 5.9847 0 0 0-3.9977 2.9 6.0462 6.0462 0 0 0 .7427 7.0966 5.98 5.98 0 0 0 .511 4.9107 6.051 6.051 0 0 0 6.5146 2.9001A5.9847 5.9847 0 0 0 13.2599 24a6.0557 6.0557 0 0 0 5.7718-4.2058 5.9894 5.9894 0 0 0 3.9977-2.9001 6.0557 6.0557 0 0 0-.7475-7.0729zm-9.022 12.6081a4.4755 4.4755 0 0 1-2.8764-1.0408l.1419-.0804 4.7783-2.7582a.7948.7948 0 0 0 .3927-.6813v-6.7369l2.02 1.1686a.071.071 0 0 1 .038.052v5.5826a4.504 4.504 0 0 1-4.4945 4.4944zm-9.6607-4.1254a4.4708 4.4708 0 0 1-.5346-3.0137l.142.0852 4.783 2.7582a.7712.7712 0 0 0 .7806 0l5.8428-3.3685v2.3324a.0804.0804 0 0 1-.0332.0615L9.74 19.9502a4.4992 4.4992 0 0 1-6.1408-1.6464zM2.3408 7.8956a4.485 4.485 0 0 1 2.3655-1.9728V11.6a.7664.7664 0 0 0 .3879.6765l5.8144 3.3543-2.0201 1.1685a.0757.0757 0 0 1-.071 0l-4.8303-2.7865A4.504 4.504 0 0 1 2.3408 7.872zm16.5963 3.8558L13.1038 8.364 15.1192 7.2a.0757.0757 0 0 1 .071 0l4.8303 2.7913a4.4944 4.4944 0 0 1-.6765 8.1042v-5.6772a.79.79 0 0 0-.407-.667zm2.0107-3.0231l-.142-.0852-4.7735-2.7818a.7759.7759 0 0 0-.7854 0L9.409 9.2297V6.8974a.0662.0662 0 0 1 .0284-.0615l4.8303-2.7866a4.4992 4.4992 0 0 1 6.6802 4.66zM8.3065 12.863l-2.02-1.1638a.0804.0804 0 0 1-.038-.0567V6.0742a4.4992 4.4992 0 0 1 7.3757-3.4537l-.142.0805L8.704 5.459a.7948.7948 0 0 0-.3927.6813zm1.0976-2.3654l2.602-1.4998 2.6069 1.4998v2.9994l-2.5974 1.4997-2.6067-1.4997Z"/></svg>
<div class="bar b1" style="left:570px;top:1347.8px;width:160px"></div>
<svg class="a" style="left:226.1px;top:1399.7px" width="28" height="28" viewBox="0 0 24 24"><path fill="#1a1a1a" d="M22.2819 9.8211a5.9847 5.9847 0 0 0-.5157-4.9108 6.0462 6.0462 0 0 0-6.5098-2.9A6.0651 6.0651 0 0 0 4.9807 4.1818a5.9847 5.9847 0 0 0-3.9977 2.9 6.0462 6.0462 0 0 0 .7427 7.0966 5.98 5.98 0 0 0 .511 4.9107 6.051 6.051 0 0 0 6.5146 2.9001A5.9847 5.9847 0 0 0 13.2599 24a6.0557 6.0557 0 0 0 5.7718-4.2058 5.9894 5.9894 0 0 0 3.9977-2.9001 6.0557 6.0557 0 0 0-.7475-7.0729zm-9.022 12.6081a4.4755 4.4755 0 0 1-2.8764-1.0408l.1419-.0804 4.7783-2.7582a.7948.7948 0 0 0 .3927-.6813v-6.7369l2.02 1.1686a.071.071 0 0 1 .038.052v5.5826a4.504 4.504 0 0 1-4.4945 4.4944zm-9.6607-4.1254a4.4708 4.4708 0 0 1-.5346-3.0137l.142.0852 4.783 2.7582a.7712.7712 0 0 0 .7806 0l5.8428-3.3685v2.3324a.0804.0804 0 0 1-.0332.0615L9.74 19.9502a4.4992 4.4992 0 0 1-6.1408-1.6464zM2.3408 7.8956a4.485 4.485 0 0 1 2.3655-1.9728V11.6a.7664.7664 0 0 0 .3879.6765l5.8144 3.3543-2.0201 1.1685a.0757.0757 0 0 1-.071 0l-4.8303-2.7865A4.504 4.504 0 0 1 2.3408 7.872zm16.5963 3.8558L13.1038 8.364 15.1192 7.2a.0757.0757 0 0 1 .071 0l4.8303 2.7913a4.4944 4.4944 0 0 1-.6765 8.1042v-5.6772a.79.79 0 0 0-.407-.667zm2.0107-3.0231l-.142-.0852-4.7735-2.7818a.7759.7759 0 0 0-.7854 0L9.409 9.2297V6.8974a.0662.0662 0 0 1 .0284-.0615l4.8303-2.7866a4.4992 4.4992 0 0 1 6.6802 4.66zM8.3065 12.863l-2.02-1.1638a.0804.0804 0 0 1-.038-.0567V6.0742a4.4992 4.4992 0 0 1 7.3757-3.4537l-.142.0805L8.704 5.459a.7948.7948 0 0 0-.3927.6813zm1.0976-2.3654l2.602-1.4998 2.6069 1.4998v2.9994l-2.5974 1.4997-2.6067-1.4997Z"/></svg>
<div class="bar b1" style="left:570px;top:1407.8px;width:150px"></div>
<svg class="a" style="left:224.2px;top:1457.8px" width="32" height="32" viewBox="0 0 32 32"><defs><linearGradient id="gg1" x1="0" y1="0.35" x2="1" y2="0.65"><stop offset="0" stop-color="#7a53c4"/><stop offset="0.38" stop-color="#7c58c6"/><stop offset="0.56" stop-color="#2a87e3"/><stop offset="1" stop-color="#1d85e8"/></linearGradient></defs><path d="M16,0 C17,5.5 26.5,15 32,16 C26.5,17 17,26.5 16,32 C15,26.5 5.5,17 0,16 C5.5,15 15,5.5 16,0 Z" fill="url(#gg1)"/></svg>
<div class="bar b2" style="left:570px;top:1467.8px;width:120px"></div>
<svg class="a" style="left:224.2px;top:1517.8px" width="32" height="32" viewBox="0 0 32 32"><defs><linearGradient id="gg2" x1="0" y1="0.35" x2="1" y2="0.65"><stop offset="0" stop-color="#7a53c4"/><stop offset="0.38" stop-color="#7c58c6"/><stop offset="0.56" stop-color="#2a87e3"/><stop offset="1" stop-color="#1d85e8"/></linearGradient></defs><path d="M16,0 C17,5.5 26.5,15 32,16 C26.5,17 17,26.5 16,32 C15,26.5 5.5,17 0,16 C5.5,15 15,5.5 16,0 Z" fill="url(#gg2)"/></svg>
<div class="bar b2" style="left:570px;top:1527.8px;width:110px"></div>
<svg class="a" style="left:956.1px;top:1339.7px" width="28" height="28" viewBox="0 0 24 24"><path fill="#1a1a1a" d="M22.2819 9.8211a5.9847 5.9847 0 0 0-.5157-4.9108 6.0462 6.0462 0 0 0-6.5098-2.9A6.0651 6.0651 0 0 0 4.9807 4.1818a5.9847 5.9847 0 0 0-3.9977 2.9 6.0462 6.0462 0 0 0 .7427 7.0966 5.98 5.98 0 0 0 .511 4.9107 6.051 6.051 0 0 0 6.5146 2.9001A5.9847 5.9847 0 0 0 13.2599 24a6.0557 6.0557 0 0 0 5.7718-4.2058 5.9894 5.9894 0 0 0 3.9977-2.9001 6.0557 6.0557 0 0 0-.7475-7.0729zm-9.022 12.6081a4.4755 4.4755 0 0 1-2.8764-1.0408l.1419-.0804 4.7783-2.7582a.7948.7948 0 0 0 .3927-.6813v-6.7369l2.02 1.1686a.071.071 0 0 1 .038.052v5.5826a4.504 4.504 0 0 1-4.4945 4.4944zm-9.6607-4.1254a4.4708 4.4708 0 0 1-.5346-3.0137l.142.0852 4.783 2.7582a.7712.7712 0 0 0 .7806 0l5.8428-3.3685v2.3324a.0804.0804 0 0 1-.0332.0615L9.74 19.9502a4.4992 4.4992 0 0 1-6.1408-1.6464zM2.3408 7.8956a4.485 4.485 0 0 1 2.3655-1.9728V11.6a.7664.7664 0 0 0 .3879.6765l5.8144 3.3543-2.0201 1.1685a.0757.0757 0 0 1-.071 0l-4.8303-2.7865A4.504 4.504 0 0 1 2.3408 7.872zm16.5963 3.8558L13.1038 8.364 15.1192 7.2a.0757.0757 0 0 1 .071 0l4.8303 2.7913a4.4944 4.4944 0 0 1-.6765 8.1042v-5.6772a.79.79 0 0 0-.407-.667zm2.0107-3.0231l-.142-.0852-4.7735-2.7818a.7759.7759 0 0 0-.7854 0L9.409 9.2297V6.8974a.0662.0662 0 0 1 .0284-.0615l4.8303-2.7866a4.4992 4.4992 0 0 1 6.6802 4.66zM8.3065 12.863l-2.02-1.1638a.0804.0804 0 0 1-.038-.0567V6.0742a4.4992 4.4992 0 0 1 7.3757-3.4537l-.142.0805L8.704 5.459a.7948.7948 0 0 0-.3927.6813zm1.0976-2.3654l2.602-1.4998 2.6069 1.4998v2.9994l-2.5974 1.4997-2.6067-1.4997Z"/></svg>
<div class="bar b1" style="left:1300px;top:1347.8px;width:800px"></div>
<svg class="a" style="left:956.1px;top:1399.7px" width="28" height="28" viewBox="0 0 24 24"><path fill="#1a1a1a" d="M22.2819 9.8211a5.9847 5.9847 0 0 0-.5157-4.9108 6.0462 6.0462 0 0 0-6.5098-2.9A6.0651 6.0651 0 0 0 4.9807 4.1818a5.9847 5.9847 0 0 0-3.9977 2.9 6.0462 6.0462 0 0 0 .7427 7.0966 5.98 5.98 0 0 0 .511 4.9107 6.051 6.051 0 0 0 6.5146 2.9001A5.9847 5.9847 0 0 0 13.2599 24a6.0557 6.0557 0 0 0 5.7718-4.2058 5.9894 5.9894 0 0 0 3.9977-2.9001 6.0557 6.0557 0 0 0-.7475-7.0729zm-9.022 12.6081a4.4755 4.4755 0 0 1-2.8764-1.0408l.1419-.0804 4.7783-2.7582a.7948.7948 0 0 0 .3927-.6813v-6.7369l2.02 1.1686a.071.071 0 0 1 .038.052v5.5826a4.504 4.504 0 0 1-4.4945 4.4944zm-9.6607-4.1254a4.4708 4.4708 0 0 1-.5346-3.0137l.142.0852 4.783 2.7582a.7712.7712 0 0 0 .7806 0l5.8428-3.3685v2.3324a.0804.0804 0 0 1-.0332.0615L9.74 19.9502a4.4992 4.4992 0 0 1-6.1408-1.6464zM2.3408 7.8956a4.485 4.485 0 0 1 2.3655-1.9728V11.6a.7664.7664 0 0 0 .3879.6765l5.8144 3.3543-2.0201 1.1685a.0757.0757 0 0 1-.071 0l-4.8303-2.7865A4.504 4.504 0 0 1 2.3408 7.872zm16.5963 3.8558L13.1038 8.364 15.1192 7.2a.0757.0757 0 0 1 .071 0l4.8303 2.7913a4.4944 4.4944 0 0 1-.6765 8.1042v-5.6772a.79.79 0 0 0-.407-.667zm2.0107-3.0231l-.142-.0852-4.7735-2.7818a.7759.7759 0 0 0-.7854 0L9.409 9.2297V6.8974a.0662.0662 0 0 1 .0284-.0615l4.8303-2.7866a4.4992 4.4992 0 0 1 6.6802 4.66zM8.3065 12.863l-2.02-1.1638a.0804.0804 0 0 1-.038-.0567V6.0742a4.4992 4.4992 0 0 1 7.3757-3.4537l-.142.0805L8.704 5.459a.7948.7948 0 0 0-.3927.6813zm1.0976-2.3654l2.602-1.4998 2.6069 1.4998v2.9994l-2.5974 1.4997-2.6067-1.4997Z"/></svg>
<div class="bar b1" style="left:1300px;top:1407.8px;width:750px"></div>
<svg class="a" style="left:954.2px;top:1457.8px" width="32" height="32" viewBox="0 0 32 32"><defs><linearGradient id="gg3" x1="0" y1="0.35" x2="1" y2="0.65"><stop offset="0" stop-color="#7a53c4"/><stop offset="0.38" stop-color="#7c58c6"/><stop offset="0.56" stop-color="#2a87e3"/><stop offset="1" stop-color="#1d85e8"/></linearGradient></defs><path d="M16,0 C17,5.5 26.5,15 32,16 C26.5,17 17,26.5 16,32 C15,26.5 5.5,17 0,16 C5.5,15 15,5.5 16,0 Z" fill="url(#gg3)"/></svg>
<div class="bar b2" style="left:1300px;top:1467.8px;width:600px"></div>
<svg class="a" style="left:954.2px;top:1517.8px" width="32" height="32" viewBox="0 0 32 32"><defs><linearGradient id="gg4" x1="0" y1="0.35" x2="1" y2="0.65"><stop offset="0" stop-color="#7a53c4"/><stop offset="0.38" stop-color="#7c58c6"/><stop offset="0.56" stop-color="#2a87e3"/><stop offset="1" stop-color="#1d85e8"/></linearGradient></defs><path d="M16,0 C17,5.5 26.5,15 32,16 C26.5,17 17,26.5 16,32 C15,26.5 5.5,17 0,16 C5.5,15 15,5.5 16,0 Z" fill="url(#gg4)"/></svg>
<div class="bar b2" style="left:1300px;top:1527.8px;width:550px"></div>
<div class="t" style="left:93.1px;top:58.0px;font-size:34.06px;font-weight:bold;color:#111;transform:scaleX(0.8558);">GEEKFLARE</div>
<div class="t" style="left:16.0px;top:228.0px;font-size:23.91px;font-weight:bold;color:#ff7a29;transform:scaleX(1.0124);">Dashboard</div>
<div class="t" style="left:28.0px;top:398.7px;font-size:24.20px;font-weight:normal;color:#777;transform:scaleX(1.0204);-webkit-text-stroke:0.3px #777;">Members</div>
<div class="t" style="left:29.5px;top:569.7px;font-size:23.62px;font-weight:normal;color:#777;transform:scaleX(1.0638);-webkit-text-stroke:0.3px #777;">Analytics</div>
<div class="t" style="left:33.9px;top:1553.7px;font-size:23.62px;font-weight:normal;color:#777;transform:scaleX(1.0631);-webkit-text-stroke:0.3px #777;">Settings</div>
<div class="t" style="left:188.1px;top:189.0px;font-size:49.28px;font-weight:bold;color:#222;transform:scaleX(0.9718);">Organization Dashboard</div>
<div class="t" style="left:1916.5px;top:199.6px;font-size:28.55px;font-weight:bold;color:#fff;transform:scaleX(0.9757);">Create Workspace</div>
<div class="t" style="left:369.5px;top:356.0px;font-size:25.22px;font-weight:normal;color:#777;transform:scaleX(0.9805);-webkit-text-stroke:0.35px #777;">Total Members</div>
<div class="t" style="left:879.3px;top:356.0px;font-size:25.22px;font-weight:normal;color:#777;transform:scaleX(0.9878);-webkit-text-stroke:0.35px #777;">Total Workspaces</div>
<div class="t" style="left:1388.6px;top:356.0px;font-size:25.22px;font-weight:normal;color:#777;transform:scaleX(0.9505);-webkit-text-stroke:0.35px #777;">Est. Token Usage</div>
<div class="t" style="left:1898.7px;top:356.0px;font-size:25.22px;font-weight:normal;color:#777;transform:scaleX(0.9716);-webkit-text-stroke:0.35px #777;">Message Volume</div>
<div class="t" style="left:369.9px;top:405.2px;font-size:63.48px;font-weight:bold;color:#222;transform:scaleX(0.9090);">25</div>
<div class="t" style="left:879.4px;top:405.2px;font-size:63.48px;font-weight:bold;color:#222;transform:scaleX(0.9419);">3</div>
<div class="t" style="left:1389.9px;top:405.2px;font-size:63.48px;font-weight:bold;color:#222;transform:scaleX(0.9141);">350K</div>
<div class="t" style="left:1899.4px;top:405.2px;font-size:63.48px;font-weight:bold;color:#222;transform:scaleX(0.9630);">2,580</div>
<div class="t" style="left:220.8px;top:578.0px;font-size:29.42px;font-weight:bold;color:#222;transform:scaleX(0.9175);">Workspaces</div>
<div class="t" style="left:948.7px;top:577.2px;font-size:29.42px;font-weight:bold;color:#222;transform:scaleX(0.9279);">Message Volume</div>
<div class="t" style="left:219.2px;top:1267.4px;font-size:27.97px;font-weight:bold;color:#222;transform:scaleX(0.9782);">AI Model Usage</div>
<div class="t" style="left:948.5px;top:1267.4px;font-size:27.97px;font-weight:bold;color:#222;transform:scaleX(0.9716);">Estimated Cost</div>
<div class="t" style="left:329.0px;top:656.2px;font-size:29.28px;font-weight:normal;color:#222;transform:scaleX(1.0240);-webkit-text-stroke:0.6px #222;">Marketing</div>
<div class="t" style="left:330.1px;top:703.1px;font-size:24.35px;font-weight:normal;color:#777;transform:scaleX(0.9117);-webkit-text-stroke:0.3px #777;">5 members</div>
<div class="t" style="left:470.0px;top:703.1px;font-size:24.35px;font-weight:normal;color:#777;transform:scaleX(0.9256);-webkit-text-stroke:0.3px #777;">Created on Apr 5, 2025</div>
<div class="t" style="left:329.0px;top:764.2px;font-size:29.28px;font-weight:normal;color:#222;transform:scaleX(1.0058);-webkit-text-stroke:0.6px #222;">Development</div>
<div class="t" style="left:330.1px;top:811.1px;font-size:24.35px;font-weight:normal;color:#777;transform:scaleX(0.9117);-webkit-text-stroke:0.3px #777;">2 members</div>
<div class="t" style="left:470.0px;top:811.1px;font-size:24.35px;font-weight:normal;color:#777;transform:scaleX(0.9119);-webkit-text-stroke:0.3px #777;">Created on Feb 23, 2025</div>
<div class="t" style="left:331.0px;top:872.2px;font-size:29.28px;font-weight:normal;color:#222;transform:scaleX(1.0168);-webkit-text-stroke:0.6px #222;">Administration</div>
<div class="t" style="left:330.1px;top:919.1px;font-size:24.35px;font-weight:normal;color:#777;transform:scaleX(0.9117);-webkit-text-stroke:0.3px #777;">3 members</div>
<div class="t" style="left:470.0px;top:919.1px;font-size:24.35px;font-weight:normal;color:#777;transform:scaleX(0.9227);-webkit-text-stroke:0.3px #777;">Created on Mar 8, 2025</div>
<div class="t" style="left:329.0px;top:980.2px;font-size:29.28px;font-weight:normal;color:#222;transform:scaleX(0.9943);-webkit-text-stroke:0.6px #222;">Design</div>
<div class="t" style="left:330.1px;top:1027.1px;font-size:24.35px;font-weight:normal;color:#777;transform:scaleX(0.9117);-webkit-text-stroke:0.3px #777;">4 members</div>
<div class="t" style="left:470.0px;top:1027.1px;font-size:24.35px;font-weight:normal;color:#777;transform:scaleX(0.9162);-webkit-text-stroke:0.3px #777;">Created on Jan 18, 2025</div>
<div class="t" style="left:330.0px;top:1088.2px;font-size:29.28px;font-weight:normal;color:#222;transform:scaleX(1.0304);-webkit-text-stroke:0.6px #222;">Content</div>
<div class="t" style="left:330.1px;top:1135.1px;font-size:24.35px;font-weight:normal;color:#777;transform:scaleX(0.9117);-webkit-text-stroke:0.3px #777;">8 members</div>
<div class="t" style="left:470.0px;top:1135.1px;font-size:24.35px;font-weight:normal;color:#777;transform:scaleX(0.9310);-webkit-text-stroke:0.3px #777;">Created on Jan 3, 2025</div>
<div class="t" style="left:269.7px;top:1342.4px;font-size:24.64px;font-weight:normal;color:#222;transform:scaleX(0.8966);-webkit-text-stroke:0.3px #222;">GPT 4.1</div>
<div class="t" style="left:999.4px;top:1342.4px;font-size:24.64px;font-weight:normal;color:#222;transform:scaleX(0.8966);-webkit-text-stroke:0.3px #222;">GPT 4.1</div>
<div class="t" style="left:269.7px;top:1402.4px;font-size:24.64px;font-weight:normal;color:#222;transform:scaleX(0.9262);-webkit-text-stroke:0.3px #222;">GPT 4.1 mini</div>
<div class="t" style="left:999.4px;top:1402.4px;font-size:24.64px;font-weight:normal;color:#222;transform:scaleX(0.9262);-webkit-text-stroke:0.3px #222;">GPT 4.1 mini</div>
<div class="t" style="left:269.6px;top:1462.4px;font-size:24.64px;font-weight:normal;color:#222;transform:scaleX(0.9783);-webkit-text-stroke:0.3px #222;">Gemini 2.0 Flash</div>
<div class="t" style="left:999.3px;top:1462.4px;font-size:24.64px;font-weight:normal;color:#222;transform:scaleX(0.9783);-webkit-text-stroke:0.3px #222;">Gemini 2.0 Flash</div>
<div class="t" style="left:269.6px;top:1522.4px;font-size:24.64px;font-weight:normal;color:#222;transform:scaleX(0.9609);-webkit-text-stroke:0.3px #222;">Gemini 2.5 Pro Preview</div>
<div class="t" style="left:999.3px;top:1522.4px;font-size:24.64px;font-weight:normal;color:#222;transform:scaleX(0.9609);-webkit-text-stroke:0.3px #222;">Gemini 2.5 Pro Preview</div>
<div class="t" style="left:759.3px;top:1342.0px;font-size:21.01px;font-weight:normal;color:#222;transform:scaleX(0.9250);-webkit-text-stroke:0.3px #222;">80%</div>
<div class="t" style="left:748.8px;top:1402.0px;font-size:21.01px;font-weight:normal;color:#222;transform:scaleX(0.8500);-webkit-text-stroke:0.3px #222;">75%</div>
<div class="t" style="left:719.1px;top:1462.0px;font-size:21.01px;font-weight:normal;color:#222;transform:scaleX(0.9250);-webkit-text-stroke:0.3px #222;">60%</div>
<div class="t" style="left:709.5px;top:1522.0px;font-size:21.01px;font-weight:normal;color:#222;transform:scaleX(0.8600);-webkit-text-stroke:0.3px #222;">55%</div>
<div class="t" style="left:2130.3px;top:1342.0px;font-size:21.01px;font-weight:normal;color:#222;transform:scaleX(0.9912);-webkit-text-stroke:0.3px #222;">$40</div>
<div class="t" style="left:2079.8px;top:1402.0px;font-size:21.01px;font-weight:normal;color:#222;transform:scaleX(0.9265);-webkit-text-stroke:0.3px #222;">$37</div>
<div class="t" style="left:1930.2px;top:1462.0px;font-size:21.01px;font-weight:normal;color:#222;transform:scaleX(0.9941);-webkit-text-stroke:0.3px #222;">$30</div>
<div class="t" style="left:1879.7px;top:1522.0px;font-size:21.01px;font-weight:normal;color:#222;transform:scaleX(0.9088);-webkit-text-stroke:0.3px #222;">$27</div>
</body></html>
